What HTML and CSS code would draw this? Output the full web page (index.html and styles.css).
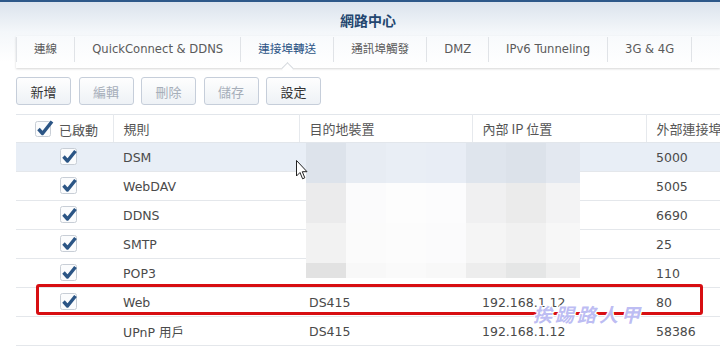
FILE: index.html
```html
<!DOCTYPE html>
<html lang="zh-Hant">
<head>
    <meta charset="UTF-8">
    <title>網路中心</title>
    <link rel="stylesheet" href="styles.css">
</head>
<body>
    <div class="window">
        <div class="titlebar">網路中心</div>

        <ul class="tabs">
            <li>連線</li>
            <li>QuickConnect &amp; DDNS</li>
            <li class="active">連接埠轉送</li>
            <li>通訊埠觸發</li>
            <li>DMZ</li>
            <li>IPv6 Tunneling</li>
            <li>3G &amp; 4G</li>
        </ul>

        <div class="toolbar">
            <button>新增</button>
            <button disabled>編輯</button>
            <button disabled>刪除</button>
            <button disabled>儲存</button>
            <button>設定</button>
        </div>

        <div class="grid-wrap">
            <table class="rules">
                <colgroup>
                    <col class="c-enable">
                    <col class="c-rule">
                    <col class="c-device">
                    <col class="c-ip">
                    <col class="c-port">
                </colgroup>
                <thead>
                    <tr>
                        <th class="head-enable">
                            <svg class="check" viewBox="0 0 20 20"><rect x="1.5" y="2.5" width="15" height="15" rx="2"/><path d="M4.5 10 L8.5 14.5 L18 2.5"/></svg>
                            已啟動
                        </th>
                        <th>規則</th>
                        <th>目的地裝置</th>
                        <th>內部 IP 位置</th>
                        <th>外部連接埠</th>
                    </tr>
                </thead>
                <tbody>
                    <tr class="selected">
                        <td class="cell-enable"><svg class="check" viewBox="0 0 20 20"><rect x="1.5" y="1.5" width="16" height="16" rx="2"/><path d="M4.5 9.5 L8.5 14 L16.5 4"/></svg></td>
                        <td>DSM</td><td></td><td></td><td>5000</td>
                    </tr>
                    <tr>
                        <td class="cell-enable"><svg class="check" viewBox="0 0 20 20"><rect x="1.5" y="1.5" width="16" height="16" rx="2"/><path d="M4.5 9.5 L8.5 14 L16.5 4"/></svg></td>
                        <td>WebDAV</td><td></td><td></td><td>5005</td>
                    </tr>
                    <tr>
                        <td class="cell-enable"><svg class="check" viewBox="0 0 20 20"><rect x="1.5" y="1.5" width="16" height="16" rx="2"/><path d="M4.5 9.5 L8.5 14 L16.5 4"/></svg></td>
                        <td>DDNS</td><td></td><td></td><td>6690</td>
                    </tr>
                    <tr>
                        <td class="cell-enable"><svg class="check" viewBox="0 0 20 20"><rect x="1.5" y="1.5" width="16" height="16" rx="2"/><path d="M4.5 9.5 L8.5 14 L16.5 4"/></svg></td>
                        <td>SMTP</td><td></td><td></td><td>25</td>
                    </tr>
                    <tr>
                        <td class="cell-enable"><svg class="check" viewBox="0 0 20 20"><rect x="1.5" y="1.5" width="16" height="16" rx="2"/><path d="M4.5 9.5 L8.5 14 L16.5 4"/></svg></td>
                        <td>POP3</td><td></td><td></td><td>110</td>
                    </tr>
                    <tr>
                        <td class="cell-enable"><svg class="check" viewBox="0 0 20 20"><rect x="1.5" y="1.5" width="16" height="16" rx="2"/><path d="M4.5 9.5 L8.5 14 L16.5 4"/></svg></td>
                        <td>Web</td><td>DS415</td><td>192.168.1.12</td><td>80</td>
                    </tr>
                    <tr>
                        <td class="cell-enable"></td>
                        <td>UPnP 用戶</td><td>DS415</td><td>192.168.1.12</td><td>58386</td>
                    </tr>
                </tbody>
            </table>

            <!-- 打馬賽克的區域 -->
            <div class="mosaic" id="mosaic"></div>

            <svg class="cursor" viewBox="0 0 12 21"><path d="M0.5 0.5 L0.5 16 L4 12.5 L6.6 18.8 L8.8 17.8 L6.3 11.7 L11 11.7 Z"/></svg>

            <div class="highlight"></div>
            <div class="watermark">挨踢路人甲</div>
        </div>
    </div>

    <script>
        // 馬賽克色塊 (7 x 4)
        const mosaicColors = [
            '#dde3eb', '#e7ecf3', '#e9eef5', '#e8edf5', '#dfe5ed', '#dce2ea', '#e3e8f0',
            '#ebebec', '#fbfbfc', '#fdfdfd', '#fcfcfd', '#f0f0f1', '#ebebeb', '#f3f3f4',
            '#f2f2f2', '#fbfbfb', '#fcfcfc', '#fbfbfc', '#f5f5f5', '#f1f1f1', '#f7f7f7',
            '#e2e2e2', '#f8f8f8', '#fafafa', '#f8f8f8', '#ededed', '#e5e6e6', '#efefef'
        ];
        const mosaic = document.getElementById('mosaic');
        mosaicColors.forEach(color => {
            const cell = document.createElement('div');
            cell.style.background = color;
            mosaic.appendChild(cell);
        });
    </script>
</body>
</html>
```

FILE: styles.css
```css
* {
    margin: 0;
    padding: 0;
    box-sizing: border-box;
}

body {
    width: 720px;
    height: 352px;
    overflow: hidden;
    background: #fff;
    font-family: 'DejaVu Sans', 'Noto Sans CJK TC', sans-serif;
    color: #444;
}

.window {
    border-top: 2px solid #2d5889;
    background: linear-gradient(#dbe3ed 0, #f4f7fa 30px, #fff 60px);
    height: 350px;
    overflow: hidden;
}

.titlebar {
    height: 34px;
    padding-left: 16px;
    text-align: center;
    line-height: 36px;
    font-family: 'Noto Sans CJK TC', sans-serif;
    font-size: 14px;
    font-weight: 700;
    color: #23466f;
}

.tabs {
    list-style: none;
    display: flex;
    margin-left: 16px;
    height: 32px;
    padding-top: 1px;
    background: linear-gradient(#f8fafc, #fff);
    box-shadow: 0 1px 2px rgba(0, 0, 0, 0.16);
    position: relative;
}

.tabs li {
    height: 25px;
    line-height: 25px;
    padding: 0 17px;
    font-size: 11.6px;
    color: #5a5a5a;
    border-right: 1px solid #e0e3e7;
    position: relative;
    white-space: nowrap;
}

.tabs li:first-child {
    border-left: 1px solid #e0e3e7;
}

.tabs li.active {
    color: #2a5385;
}

.tabs li.active::after {
    content: '';
    position: absolute;
    left: 50%;
    bottom: -11px;
    width: 8px;
    height: 8px;
    margin-left: -4px;
    background: #fff;
    border-left: 1px solid #d4d8dd;
    border-top: 1px solid #d4d8dd;
    transform: rotate(45deg);
}

.toolbar {
    display: flex;
    gap: 7.5px;
    padding: 9px 0 0 16px;
    height: 46px;
}

.toolbar button {
    width: 55px;
    height: 28px;
    border: 1px solid #c6ceda;
    border-radius: 3px;
    background: linear-gradient(#fefefe, #eef2f6);
    font-family: 'Noto Sans CJK TC', sans-serif;
    font-size: 13px;
    color: #333;
}

.toolbar button:disabled {
    color: #a6aeb9;
}

.grid-wrap {
    position: relative;
    margin-left: 16px;
}

.rules {
    border-collapse: collapse;
    table-layout: fixed;
    width: 704px;
}

.c-enable { width: 97px; }
.c-rule { width: 186px; }
.c-device { width: 173px; }
.c-ip { width: 174px; }
.c-port { width: 74px; }

.rules th {
    height: 28px;
    border-top: 1px solid #e2e6eb;
    border-bottom: 1px solid #e2e6eb;
    border-right: 1px solid #e6e9ed;
    text-align: left;
    padding-left: 10px;
    font-family: 'Noto Sans CJK TC', sans-serif;
    font-size: 13px;
    font-weight: 400;
    color: #555;
    white-space: nowrap;
    overflow: hidden;
}

.rules th:last-child {
    border-right: none;
}

.rules th.head-enable {
    padding-left: 18px;
}

.head-enable .check {
    vertical-align: -4px;
    margin-right: 2px;
}

.rules td {
    height: 29px;
    border-bottom: 1px solid #e4e7eb;
    padding-left: 10px;
    font-size: 12.5px;
    color: #4a4a4a;
    white-space: nowrap;
    overflow: hidden;
}

.rules td.cell-enable {
    padding-left: 43px;
    padding-top: 3px;
}

.rules tr.selected td {
    background: #e8eef6;
}

.check {
    width: 20px;
    height: 20px;
}

.check rect {
    fill: #fbfcfd;
    stroke: #c8ced6;
    stroke-width: 1;
}

.check path {
    fill: none;
    stroke: #2b5585;
    stroke-width: 3.4;
    stroke-linejoin: round;
}

.mosaic {
    position: absolute;
    left: 290px;
    top: 29px;
    display: grid;
    grid-template-columns: repeat(6, 40px) 34px;
    grid-template-rows: 40px 40px 40px 15px;
}

.cursor {
    position: absolute;
    left: 280px;
    top: 46px;
    width: 12px;
    height: 21px;
}

.cursor path {
    fill: #fff;
    stroke: #222;
    stroke-width: 1;
}

.highlight {
    position: absolute;
    left: 20px;
    top: 170px;
    width: 667px;
    height: 31px;
    border: 3px solid #d70e12;
    border-radius: 3px;
}

.watermark {
    position: absolute;
    left: 517px;
    top: 186px;
    font-family: 'Noto Sans CJK TC', sans-serif;
    font-size: 19px;
    font-weight: 700;
    font-style: italic;
    letter-spacing: 3px;
    color: rgba(160, 160, 238, 0.7);
    text-shadow: 1px 1px 0 #fff, -1px -1px 0 #fff, 1px -1px 0 #fff, -1px 1px 0 #fff;
}
```
